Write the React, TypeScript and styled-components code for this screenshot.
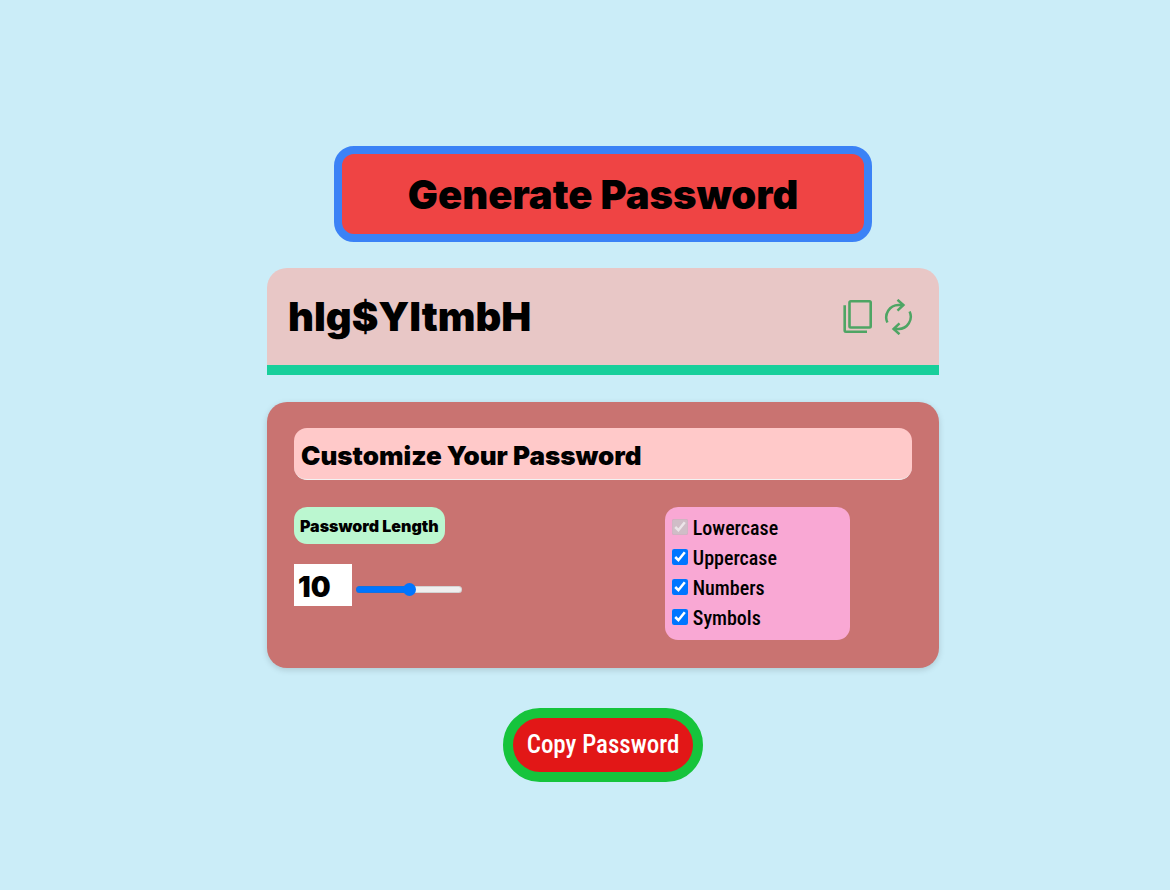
import React, { useState } from "react";
import styled, { createGlobalStyle } from "styled-components";

const heavy = `Inter, "Noto Sans", sans-serif`;
const narrow = `"Roboto Condensed", Roboto, sans-serif`;

const GlobalStyle = createGlobalStyle`
  *, *::before, *::after { box-sizing: border-box; }
  body {
    margin: 0;
    background: #cbedf8;
    color: #000;
    font-family: ${heavy};
  }
`;

const Page = styled.main`
  display: flex;
  justify-content: center;
  padding: 146px 16px 40px 52px;
`;

const Generator = styled.div`
  display: flex;
  flex-direction: column;
  align-items: center;
  width: 100%;
  max-width: 672px;
`;

const GenerateButton = styled.button`
  width: 80%;
  height: 96px;
  padding: 2px 0 0;
  border: 8px solid #3b82f6;
  border-radius: 20px;
  background: #ef4444;
  color: #000;
  font: 900 40px/52px ${heavy};
  cursor: pointer;
`;

const PasswordBar = styled.section`
  display: flex;
  align-items: center;
  justify-content: space-between;
  width: 100%;
  margin-top: 26px;
  padding: 22px 26px 22px 21px;
  border-bottom: 10px solid #18cf9b;
  border-radius: 20px 20px 0 0;
  background: #e8c7c6;
`;

const Password = styled.output`
  padding-top: 1px;
  font: 900 40px/52px ${heavy};
`;

const Actions = styled.div`
  display: flex;
  gap: 11px;
`;

const IconButton = styled.button`
  display: flex;
  padding: 0;
  border: 0;
  background: none;
  color: #4ea564;
  cursor: pointer;

  svg {
    display: block;
    fill: none;
    stroke: currentColor;
  }
`;

const Panel = styled.section`
  width: 100%;
  margin-top: 27px;
  padding: 26px 27px 28px;
  border-radius: 20px;
  background: #c97371;
  box-shadow: 0 2px 6px rgba(0, 0, 0, 0.15);
`;

const PanelTitle = styled.h2`
  margin: 0;
  padding: 10px 7px 6px;
  border-bottom: 1px solid #f3f3f3;
  border-radius: 13px;
  background: #ffc9c9;
  font: 900 26px/35px ${heavy};
`;

const Settings = styled.div`
  display: grid;
  grid-template-columns: 60% 30%;
  align-items: start;
  margin-top: 27px;
`;

const LengthLabel = styled.label`
  display: inline-block;
  padding: 9px 6px 7px;
  border-radius: 13px;
  background: #bbf7d0;
  font: 900 16px/21px ${heavy};
`;

const LengthRow = styled.div`
  display: flex;
  align-items: center;
  gap: 4px;
  margin-top: 20px;
`;

const LengthInput = styled.input`
  width: 58px;
  height: 42px;
  padding: 3px 4px 0;
  border: 0;
  background: #fff;
  color: #000;
  font: 900 28px/39px ${heavy};
`;

const Slider = styled.input`
  width: 106px;
  height: 12px;
  margin: 8px 0 0;
  appearance: none;
  background: transparent;

  &::-webkit-slider-runnable-track {
    height: 7px;
    border-radius: 4px;
    background: linear-gradient(to right, #0075ff 50%, #efefef 50%);
    box-shadow: inset 0 0 0 1px rgba(100, 100, 100, 0.2);
  }

  &::-webkit-slider-thumb {
    width: 13px;
    height: 13px;
    margin-top: -3px;
    appearance: none;
    border-radius: 50%;
    background: #0075ff;
  }
`;

const Options = styled.fieldset`
  min-width: 0;
  margin: 0;
  padding: 6px 7px 7px;
  border: 0;
  border-radius: 13px;
  background: #f9a8d4;
`;

const Option = styled.label`
  display: flex;
  align-items: center;
  gap: 5px;
  height: 30px;
  font: 500 20px/30px ${narrow};
`;

const Checkbox = styled.input`
  width: 16px;
  height: 16px;
  margin: 0 0 2px;
`;

const CopyButton = styled.button`
  width: 200px;
  height: 74px;
  margin-top: 40px;
  padding: 0;
  border: 10px solid #16c43c;
  border-radius: 37px;
  background: #e21717;
  color: #fff;
  font: 500 25px/30px ${narrow};
  cursor: pointer;
`;

const CopyIcon = () => (
  <svg width="30" height="36" viewBox="0 0 30 36" strokeWidth="2.6" aria-hidden="true">
    <rect x="6.5" y="2.3" width="21.2" height="26.2" rx="1.2" />
    <path d="M1.7 6.2V31.6Q1.7 32.8 2.9 32.8H24" />
  </svg>
);

const RefreshIcon = () => (
  <svg width="29" height="36" viewBox="0 0 29 36" strokeWidth="2.5" aria-hidden="true">
    <path d="M3.4 23.6A12.4 12.4 0 0 1 14.5 6H19.3" />
    <path d="M13.5 0.8L19.4 6L13.5 11.6" />
    <path d="M25.6 12.4A12.4 12.4 0 0 1 14.5 30H9.7" />
    <path d="M15.5 35.2L9.6 30L15.5 24.4" />
  </svg>
);

const optionNames = ["Lowercase", "Uppercase", "Numbers", "Symbols"];
const letters = "abcdefghijklmnopqrstuvwxyz";
const sets = [letters, letters.toUpperCase(), "0123456789", "!@#$%^&*"];
const minLength = 4;
const maxLength = 16;

export default function App() {
  const [password, setPassword] = useState("hlg$YltmbH");
  const [length, setLength] = useState(10);
  const [enabled, setEnabled] = useState([true, true, true, true]);

  const generate = () => {
    const pool = sets.filter((_, i) => enabled[i]).join("");
    setPassword(
      Array.from({ length }, () => pool[Math.floor(Math.random() * pool.length)]).join("")
    );
  };
  const copy = () => navigator.clipboard?.writeText(password);
  const toggle = (index: number) =>
    setEnabled(enabled.map((on, i) => (i === index ? !on : on)));

  return (
    <>
      <GlobalStyle />
      <Page>
        <Generator>
          <GenerateButton type="button" onClick={generate}>Generate Password</GenerateButton>
          <PasswordBar>
            <Password>{password}</Password>
            <Actions>
              <IconButton type="button" aria-label="Copy" onClick={copy}><CopyIcon /></IconButton>
              <IconButton type="button" aria-label="Regenerate" onClick={generate}><RefreshIcon /></IconButton>
            </Actions>
          </PasswordBar>
          <Panel>
            <PanelTitle>Customize Your Password</PanelTitle>
            <Settings>
              <div>
                <LengthLabel htmlFor="length">Password Length</LengthLabel>
                <LengthRow>
                  <LengthInput
                    id="length"
                    inputMode="numeric"
                    value={length}
                    onChange={(e) => setLength(Math.min(maxLength, Number(e.target.value) || 0))}
                  />
                  <Slider
                    type="range"
                    min={minLength}
                    max={maxLength}
                    value={length}
                    aria-label="Password length slider"
                    onChange={(e) => setLength(Number(e.target.value))}
                  />
                </LengthRow>
              </div>
              <Options aria-label="Characters">
                {optionNames.map((name, i) => (
                  <Option key={name}>
                    <Checkbox
                      type="checkbox"
                      checked={enabled[i]}
                      disabled={i === 0}
                      onChange={() => toggle(i)}
                    />
                    {name}
                  </Option>
                ))}
              </Options>
            </Settings>
          </Panel>
          <CopyButton type="button" onClick={copy}>Copy Password</CopyButton>
        </Generator>
      </Page>
    </>
  );
}
